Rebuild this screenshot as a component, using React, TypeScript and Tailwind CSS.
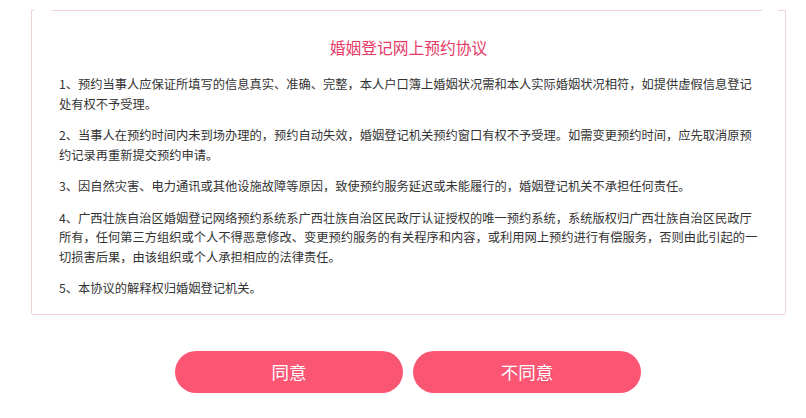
import React from "react";

const paragraphs = [
  "1、预约当事人应保证所填写的信息真实、准确、完整，本人户口簿上婚姻状况需和本人实际婚姻状况相符，如提供虚假信息登记处有权不予受理。",
  "2、当事人在预约时间内未到场办理的，预约自动失效，婚姻登记机关预约窗口有权不予受理。如需变更预约时间，应先取消原预约记录再重新提交预约申请。",
  "3、因自然灾害、电力通讯或其他设施故障等原因，致使预约服务延迟或未能履行的，婚姻登记机关不承担任何责任。",
  "4、广西壮族自治区婚姻登记网络预约系统系广西壮族自治区民政厅认证授权的唯一预约系统，系统版权归广西壮族自治区民政厅所有，任何第三方组织或个人不得恶意修改、变更预约服务的有关程序和内容，或利用网上预约进行有偿服务，否则由此引起的一切损害后果，由该组织或个人承担相应的法律责任。",
  "5、本协议的解释权归婚姻登记机关。",
];

export default function App() {
  return (
    <div
      className="w-[806px] h-[418px] bg-white pt-[10px] overflow-hidden"
      style={{ fontFamily: '"Microsoft YaHei", "Noto Sans CJK SC", "Noto Sans", sans-serif' }}
    >
      <div className="ml-[31px] w-[755px]">
        <div className="border-x border-b border-[#f6d3d3] rounded-b-[2px]">
          <div className="flex h-px">
            <div className="w-[2px] bg-[#f6d3d3]" />
            <div className="w-[18px]" />
            <div className="flex-1 bg-[#f6d3d3]" />
            <div className="w-[16px]" />
            <div className="w-[7px] bg-[#f6d3d3]" />
          </div>
          <div className="pt-[25px] pb-[15px] pl-[27px]">
            <h1 className="w-[699px] text-center text-[15.75px] leading-[24px] text-[#e63a66] font-normal mb-[15px]">
              婚姻登记网上预约协议
            </h1>
            <div className="w-[699px] text-[12.25px] leading-[19.5px] text-[#333333]">
              {paragraphs.map((p, i) => (
                <p key={i} className={i < paragraphs.length - 1 ? "mb-[12px]" : ""}>
                  {p}
                </p>
              ))}
            </div>
          </div>
        </div>
        <div className="flex gap-[10px] mt-[36px] ml-[144px]">
          <button className="w-[228px] h-[42px] rounded-full bg-[#fb5574] text-white text-[17.5px] leading-[42px]">
            同意
          </button>
          <button className="w-[228px] h-[42px] rounded-full bg-[#fb5574] text-white text-[17.5px] leading-[42px]">
            不同意
          </button>
        </div>
      </div>
    </div>
  );
}
